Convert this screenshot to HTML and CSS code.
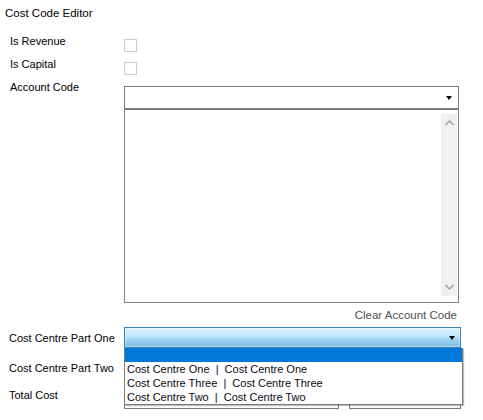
FILE: index.html
```html
<!DOCTYPE html>
<html>
<head>
<meta charset="utf-8">
<link rel="stylesheet" href="styles.css">
</head>
<body>
<div class="form">
  <div class="title">Cost Code Editor</div>

  <div class="row row-check">
    <div class="label">Is Revenue</div>
    <div class="control"><span class="checkbox"></span></div>
  </div>
  <div class="row row-check">
    <div class="label">Is Capital</div>
    <div class="control"><span class="checkbox"></span></div>
  </div>

  <div class="row row-account">
    <div class="label">Account Code</div>
    <div class="control">
      <div class="combo">
        <span class="arrow"></span>
      </div>
      <div class="listbox">
        <div class="scrollbar">
          <svg class="chev" width="9" height="6" viewBox="0 0 9 6"><path d="M0.5 5 L4.5 1 L8.5 5" fill="none" stroke="#a6a6a6" stroke-width="1.6"/></svg>
          <svg class="chev" width="9" height="6" viewBox="0 0 9 6"><path d="M0.5 1 L4.5 5 L8.5 1" fill="none" stroke="#a6a6a6" stroke-width="1.6"/></svg>
        </div>
      </div>
    </div>
  </div>

  <div class="clear-row"><span class="clear-link">Clear Account Code</span></div>

  <div class="row row-cc1">
    <div class="label label-low">Cost Centre Part One</div>
    <div class="control">
      <div class="combo-wrap">
        <div class="combo combo-active">
          <span class="arrow"></span>
        </div>
        <div class="dropdown">
          <div class="item item-selected">&nbsp;</div>
          <div class="item">Cost Centre One&nbsp; |&nbsp; Cost Centre One</div>
          <div class="item">Cost Centre Three&nbsp; |&nbsp; Cost Centre Three</div>
          <div class="item">Cost Centre Two&nbsp; |&nbsp; Cost Centre Two</div>
        </div>
      </div>
    </div>
  </div>

  <div class="row row-cc2">
    <div class="label label-low">Cost Centre Part Two</div>
    <div class="control"><div class="combo combo-plain"></div></div>
  </div>

  <div class="row row-total">
    <div class="label label-low">Total Cost</div>
    <div class="control total-controls">
      <div class="textbox"></div>
      <div class="textbox textbox-b"></div>
    </div>
  </div>
</div>
</body>
</html>
```

FILE: styles.css
```css
* { box-sizing: border-box; }
html, body {
  margin: 0;
  padding: 0;
  background: #ffffff;
}
body {
  width: 483px;
  height: 420px;
  overflow: hidden;
  font-family: "Liberation Sans", Arial, sans-serif;
  font-size: 11px;
  color: #000;
}
.form {
  display: flex;
  flex-direction: column;
}
.title {
  margin: 6px 0 0 5px;
  line-height: 14px;
  height: 28px;
  font-size: 11.5px;
}
.row {
  display: flex;
  align-items: flex-start;
}
.label {
  width: 124px;
  padding-left: 10px;
  line-height: 14px;
  white-space: nowrap;
  flex: none;
}
.label-low {
  padding-left: 9px;
  padding-top: 4px;
}
.control {
  flex: none;
}
.row-check { height: 23px; }
.checkbox {
  display: block;
  width: 13px;
  height: 13px;
  margin-top: 5px;
  border: 1px solid #cccccc;
  background: #fff;
}
.row-account { height: 228px; }
.combo {
  position: relative;
  width: 335px;
  height: 23px;
  margin-top: 6px;
  border: 1px solid #7a7a7a;
  background: #fff;
}
.arrow {
  position: absolute;
  right: 6px;
  top: 9px;
  width: 0;
  height: 0;
  border-left: 3.5px solid transparent;
  border-right: 3.5px solid transparent;
  border-top: 4px solid #000;
}
.listbox {
  width: 335px;
  height: 194px;
  border: 1px solid #828282;
  border-top-color: #7a7a7a;
  display: flex;
  justify-content: flex-end;
  padding: 4px 1px 6px 0;
}
.scrollbar {
  width: 16px;
  background: #f0f0f0;
  display: flex;
  flex-direction: column;
  justify-content: space-between;
  align-items: center;
  padding: 6px 0 6px;
}
.chev { display: block; }
.clear-row {
  display: flex;
  justify-content: flex-end;
  padding-right: 26px;
  height: 19px;
  line-height: 14px;
  font-size: 11.5px;
}
.clear-link { color: #505050; }
.row-cc1 { height: 30px; }
.combo-wrap {
  position: relative;
}
.combo-active {
  width: 337px;
  height: 21px;
  margin-top: 0;
  border: 1px solid #3c7fb1;
  background: linear-gradient(#eaf6fd 0, #d9f0fc 1px, #bee6fd 9px, #a7d9f5 10px, #7fbde2 19px);
  box-shadow: inset 0 0 0 1px rgba(255,255,255,0.35);
}
.combo-active .arrow { top: 8px; right: 5px; }
.dropdown {
  position: absolute;
  left: 0;
  top: 21px;
  width: 339px;
  height: 57px;
  background: #fff;
  border: 1px solid #7a7a7a;
  border-top: 0;
  box-shadow: 1px 1px 1px rgba(0,0,0,0.25);
  z-index: 5;
  font-family: "Liberation Sans", Arial, sans-serif;
  font-size: 11px;
  color: #0a0a14;
}
.item {
  height: 14px;
  line-height: 14px;
  padding-left: 2px;
  white-space: nowrap;
}
.item-selected {
  background: #0078d7;
}
.row-cc2 { height: 27px; }
.combo-plain {
  width: 337px;
  height: 21px;
  margin-top: 0;
}
.row-total { height: 30px; }
.total-controls {
  display: flex;
  gap: 10px;
}
.textbox {
  width: 215px;
  height: 24px;
  margin-top: 1px;
  border: 1px solid #7a7a7a;
  background: #fff;
}
.textbox-b { width: 112px; }
```
